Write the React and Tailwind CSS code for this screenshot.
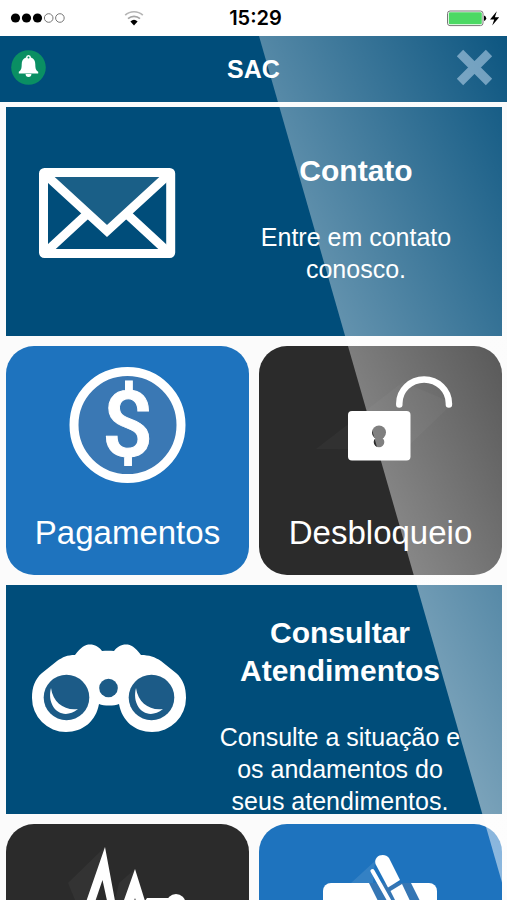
// App.jsx
function StatusBar() {
  return (
    <div className="grid h-9 shrink-0 grid-cols-[1fr_auto_1fr] items-center bg-white px-2 text-black">
      <div className="flex items-center gap-[58px]">
        <svg width="58" height="12" viewBox="0 0 58 12" aria-hidden="true">
          <circle cx="7.5" cy="6" r="4.6" />
          <circle cx="18.5" cy="6" r="4.6" />
          <circle cx="29.5" cy="6" r="4.6" />
          <circle cx="40.7" cy="6" r="4.3" fill="none" stroke="#777" strokeWidth="1" />
          <circle cx="51.9" cy="6" r="4.3" fill="none" stroke="#777" strokeWidth="1" />
        </svg>
        <svg width="20" height="16" viewBox="0 0 20 16" fill="none" aria-hidden="true">
          <path d="M1.2 5.2a13 13 0 0 1 17.6 0" stroke="#b5b5b5" strokeWidth="1.7" />
          <path d="M4 8.6a9 9 0 0 1 12 0" stroke="#a5a5a5" strokeWidth="1.7" />
          <path d="M6.4 11.4a5.4 5.4 0 0 1 7.2 0L10 15.4z" fill="#000" />
        </svg>
      </div>
      <span className="pl-1 font-['Inter',sans-serif] text-[20px] leading-6 font-semibold">15:29</span>
      <svg className="justify-self-end" width="54" height="18" viewBox="0 0 54 18" aria-hidden="true">
        <rect x="2.5" y="2" width="35.5" height="14.6" rx="2.5" fill="#fff" stroke="#777" strokeWidth="1" />
        <rect x="3.8" y="3.3" width="33" height="12" rx="1.2" fill="#4cd964" />
        <path d="M39 6.6q2.2.6 2.2 2.7T39 12z" />
        <path d="M51.8 2.2 45 10.4h4.2l-2 6 7-8.2h-4.3z" />
      </svg>
    </div>
  );
}

function Header() {
  return (
    <header className="flex h-[66px] shrink-0 items-center justify-between bg-[#004d7a] px-[11px]">
      <button type="button" aria-label="Notificações" className="size-9">
        <svg width="36" height="36" viewBox="0 0 36 36" className="overflow-visible">
          <circle cx="17.5" cy="16.5" r="17.3" fill="#0a8f63" />
          <path
            d="M17.5 4a2.6 2.6 0 0 1 2.5 2.6c3 1 4.3 3.6 4.3 7 0 4.5.9 6 2.9 7.2v1.7H7.8v-1.7c2-1.2 2.9-2.7 2.9-7.2 0-3.4 1.3-6 4.3-7A2.6 2.6 0 0 1 17.5 4z"
            fill="#fff"
          />
          <path d="M14.6 23h5.8a2.9 2.9 0 0 1-5.8 0z" fill="#fff" />
          <circle cx="17.5" cy="6.5" r="1" fill="#0a8f63" />
        </svg>
      </button>
      <h1 className="text-[25px] leading-8 font-bold text-white">SAC</h1>
      <button type="button" aria-label="Fechar" className="size-9">
        <svg width="36" height="36" viewBox="0 0 36 36" fill="none" className="overflow-visible">
          <path d="M0 2 29 31M29 2 0 31" stroke="#6598ba" strokeWidth="9" />
        </svg>
      </button>
    </header>
  );
}

function EnvelopeIcon() {
  return (
    <svg className="mt-[60px] shrink-0" width="137" height="92" viewBox="0 0 137 92" aria-hidden="true">
      <path d="M12 9h113L69 66z" fill="#fff" opacity=".1" />
      <rect x="4.5" y="5.4" width="127.2" height="81.2" rx="1" fill="none" stroke="#fff" strokeWidth="9" strokeLinejoin="round" />
      <g fill="none" stroke="#fff" strokeWidth="9">
        <path d="M8 9 68 64 128 9" />
        <path d="M8 84 47 48M128 84 89 48" />
      </g>
    </svg>
  );
}

function BinocularsIcon() {
  return (
    <svg className="mt-[58px] shrink-0" width="155" height="90" viewBox="0 0 155 90" aria-hidden="true">
      <path
        d="M43 12C49 4 53 1.5 58 1.5c5 0 9 2.500 12 6.500 4-.5 8-.5 12 0 3-4 7-6.500 12-6.500 5 0 9 2.500 15 10.500 8 0 14 2 20 6l15 12c7 6 10 14 10 25a34 34 0 0 1-34 34c-17 0-30-11-33-28-5 2-15 2-20 0-3 17-16 28-33 28A34 34 0 0 1 0 55c0-11 3-19 10-25l15-12c6-4 10-6 18-6z"
        fill="#fff"
      />
      <g fill="#1c5b87">
        <circle cx="34.5" cy="54.5" r="22.8" />
        <circle cx="119.5" cy="54.5" r="22.8" />
        <circle cx="76.5" cy="45" r="9.3" />
      </g>
      <g fill="#fff">
        <path d="M19 45c-5 19 11 34 27 21-13 2-25-6-27-21z" />
        <path d="M104 45c-5 19 11 34 27 21-13 2-25-6-27-21z" />
      </g>
    </svg>
  );
}

function DollarIcon() {
  return (
    <>
      <circle cx="74.5" cy="58" r="53.5" fill="#3a78b4" stroke="#fff" strokeWidth="9" />
      <text
        x="74.5"
        y="89"
        textAnchor="middle"
        fill="#fff"
        stroke="#fff"
        strokeWidth="1"
        fontSize="90"
        fontWeight="500"
        fontFamily="Roboto, sans-serif"
      >
        $
      </text>
    </>
  );
}

function UnlockIcon() {
  return (
    <>
      <path d="M10 82 97 15 147 36 98 83z" fill="#fff" opacity=".03" />
      <rect x="42" y="44" width="62.5" height="49.5" rx="4" fill="#fff" />
      <path d="M93.3 37.5v-1a24.8 24 0 0 1 49.6 0v1" fill="none" stroke="#fff" strokeWidth="6.5" strokeLinecap="round" />
      <circle cx="73" cy="65.5" r="7" fill="#2b2b2b" />
      <circle cx="73" cy="75" r="5.3" fill="#2b2b2b" />
    </>
  );
}

function PulseIcon() {
  return (
    <>
      <path d="M15 38 52 2 45 55H22z" fill="#fff" opacity=".04" />
      <path d="M66 38 82 24 76 55H62z" fill="#fff" opacity=".04" />
      <path
        d="M52 2 33 57 21 84H3v9h24l15-36 7.500-22L65 106l17-53 11 33 7-24h17v-9H94l-2 3L82 24 65 72z"
        fill="#fff"
      />
      <circle cx="123" cy="58.5" r="9.5" fill="#fff" />
    </>
  );
}

function PenIcon() {
  return (
    <g transform="translate(-1 0)">
      <path d="M46 38 70 16 68 38z" fill="#fff" opacity=".1" />
      <path d="M26 38h98a8 8 0 0 1 8 8v68H18V46a8 8 0 0 1 8-8z" fill="#fff" />
      <path d="M64 38h42l34 68-38 8z" fill="#3576b4" />
      <path d="m67.5 26 22 39" stroke="#fff" strokeWidth="4" strokeLinecap="round" />
      <path d="M70.5 19C68 10 80 7 84 13L95 35 83 42.5z" fill="#fff" />
      <path d="M85.5 46 97 39l18 38-11 6z" fill="#fff" />
    </g>
  );
}

function WideCard({ title, text, icon, className }) {
  return (
    <a href="#" className={`col-span-2 flex h-[229px] items-start justify-between bg-[#004d7a] text-white ${className}`}>
      {icon}
      <div className="w-[252px] text-center">
        <h2 className="text-[30px] leading-[38px] font-bold">{title}</h2>
        <p className="mt-[31px] text-[25px] leading-8">{text}</p>
      </div>
    </a>
  );
}

function Tile({ label, color, children }) {
  return (
    <a href="#" className={`flex h-[229px] flex-col items-center rounded-[28px] pt-[21px] text-white ${color}`}>
      <svg width="150" height="116" viewBox="0 0 150 116" fill="none" aria-hidden="true">
        {children}
      </svg>
      {label && <span className="mt-[30px] text-[33px] leading-10">{label}</span>}
    </a>
  );
}

// diagonal light reflection over everything below the status bar
function Glare() {
  return (
    <svg
      className="pointer-events-none absolute inset-0 size-full"
      viewBox="0 0 507 864"
      preserveAspectRatio="none"
      aria-hidden="true"
    >
      <defs>
        <linearGradient id="glare" gradientUnits="userSpaceOnUse" x1="507" y1="0" x2="178" y2="151">
          <stop offset="0" stopColor="#fff" stopOpacity=".05" />
          <stop offset="1" stopColor="#fff" stopOpacity=".5" />
        </linearGradient>
      </defs>
      <path d="M259 0H507V864z" fill="url(#glare)" />
    </svg>
  );
}

export default function App() {
  return (
    <div className="flex h-screen flex-col overflow-hidden bg-[#fbfbfb] font-['Liberation_Sans',Arial,sans-serif]">
      <StatusBar />
      <div className="relative flex min-h-0 flex-1 flex-col overflow-hidden">
        <Header />
        <main className="grid grid-cols-2 gap-[10px] pt-[5px] pr-[5px] pl-[6px]">
          <WideCard
            title="Contato"
            text="Entre em contato conosco."
            icon={<EnvelopeIcon />}
            className="pr-5 pl-[33px] [&>div]:mt-[45px]"
          />
          <Tile label="Pagamentos" color="bg-[#1e73be]">
            <DollarIcon />
          </Tile>
          <Tile label="Desbloqueio" color="bg-[#2b2b2b]">
            <UnlockIcon />
          </Tile>
          <WideCard
            title="Consultar Atendimentos"
            text="Consulte a situação e os andamentos do seus atendimentos."
            icon={<BinocularsIcon />}
            className="pr-9 pl-[26px] [&>div]:mt-[29px]"
          />
          <Tile color="bg-[#2b2b2b]">
            <PulseIcon />
          </Tile>
          <Tile color="bg-[#1e73be]">
            <PenIcon />
          </Tile>
        </main>
        <Glare />
      </div>
    </div>
  );
}
